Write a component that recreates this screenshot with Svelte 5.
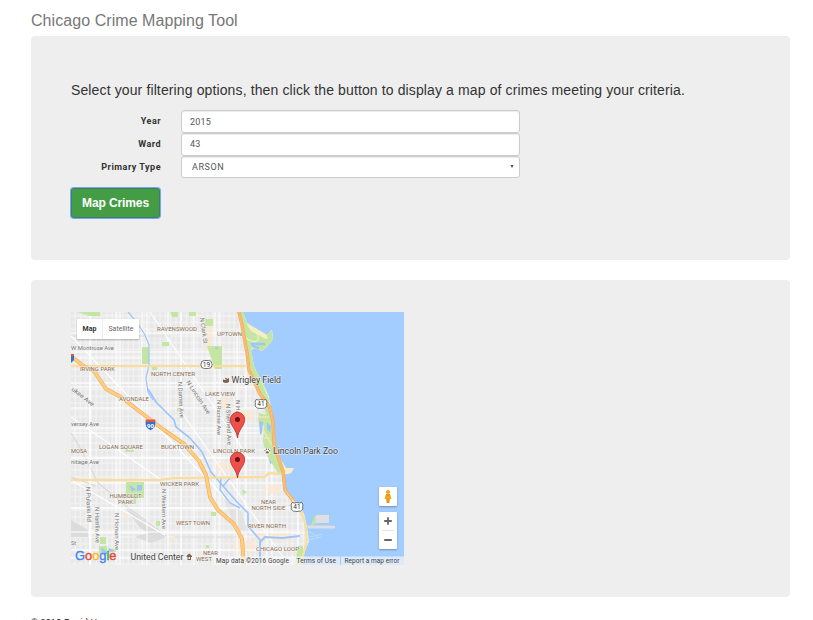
<script>
  const brown = '#8a6e50';
  const gray = '#777';

  // x, y, text, width, size, colour, rotation
  const labels = [
    [157, 331, 'RAVENSWOOD', 40, 6.2, brown, 0],
    [217, 335.5, 'UPTOWN', 25, 6.2, brown, 0],
    [80, 371, 'IRVING PARK', 35, 6, brown, 0],
    [151, 376, 'NORTH CENTER', 44, 6.2, brown, 0],
    [119, 400.5, 'AVONDALE', 30, 6.2, brown, 0],
    [205, 395.5, 'LAKE VIEW', 30, 6.2, brown, 0],
    [99, 448.5, 'LOGAN SQUARE', 44, 6.2, brown, 0],
    [161, 449, 'BUCKTOWN', 33, 6.2, brown, 0],
    [213, 452.5, 'LINCOLN PARK', 42, 6.2, brown, 0],
    [71, 452.5, 'MOSA', 16, 6.2, brown, 0],
    [160, 485.5, 'WICKER PARK', 39, 6.2, brown, 0],
    [109.5, 497.5, 'HUMBOLDT', 32, 6.2, brown, 0],
    [118, 503.5, 'PARK', 15, 6.2, brown, 0],
    [176, 525, 'WEST TOWN', 34, 6.2, brown, 0],
    [261, 504, 'NEAR', 15, 6.2, brown, 0],
    [251.5, 510.3, 'NORTH SIDE', 34, 6.2, brown, 0],
    [248, 528, 'RIVER NORTH', 38, 6.2, brown, 0],
    [256, 551, 'CHICAGO LOOP', 43, 6.2, brown, 0],
    [203, 555, 'NEAR', 15, 6.2, brown, 0],
    [196, 561, 'WEST', 16, 6.2, brown, 0],
    [71, 349.5, 'W Montrose Ave', 43, 6, gray, 0],
    [71, 425.5, 'versey Ave', 28, 6, gray, 0],
    [71, 463.5, 'nitage Ave', 28, 6, gray, 0],
    [71, 544.5, 'St', 5, 6, gray, 0],
    [71, 390, 'ukee Ave', 27, 6, gray, 38],
    [200, 318, 'N Clark St', 26, 6, gray, 82],
    [178, 382, 'N Damen Ave', 36, 6, gray, 87],
    [186, 382, 'N Lincoln Ave', 39, 6, gray, 57],
    [217, 400, 'N Racine Ave', 35, 6, gray, 90],
    [226, 404, 'N Sheffield Ave', 41, 6, gray, 88],
    [236, 400, 'N Halsted', 28, 6, gray, 90],
    [86, 487, 'N Pulaski Rd', 35, 6, gray, 88],
    [95, 507, 'N Hamlin Ave', 36, 6, gray, 89],
    [115, 513, 'N Homan Ave', 37, 6, gray, 90],
    [162, 489, 'N Western Ave', 40, 6, gray, 90]
  ];

  const places = [
    [231.5, 383, 'Wrigley Field', 49.5],
    [273, 454, 'Lincoln Park Zoo', 65],
    [130.5, 559.5, 'United Center', 53]
  ];

  const pins = [[237.5, 438], [237.5, 478]];
  const thin = [
    'M71 336L225 498', 'M71 417L170 486', 'M71 480L165 535', 'M150 312L250 460', 'M180 410L285 560',
    'M71 352H245', 'M71 387H257', 'M71 428H270', 'M71 458H278', 'M71 508H292', 'M71 532H300', 'M71 550H300',
    'M90 312V565', 'M120 312V565', 'M147 312V565', 'M181 312V565', 'M215 312V565', 'M237 330V565', 'M267 440V565'
  ];
</script>

<main>
  <h3>Chicago Crime Mapping Tool</h3>

  <section class="panel filters">
    <p>Select your filtering options, then click the button to display a map of crimes meeting your criteria.</p>
    <form onsubmit={(e) => e.preventDefault()}>
      <div class="row"><label for="year">Year</label><input id="year" value="2015" /></div>
      <div class="row"><label for="ward">Ward</label><input id="ward" class="ward" value="43" /></div>
      <div class="row">
        <label for="type">Primary Type</label>
        <button type="button" id="type" class="select">
          <span>ARSON</span>
          <svg width="4" height="3" viewBox="0 0 4 3"><path d="M.5 0H3.500L2 3Z" fill="#444" /></svg>
        </button>
      </div>
      <button type="submit" class="submit">Map Crimes</button>
    </form>
  </section>

  <section class="panel results">
    <div class="map">
      <svg class="canvas" viewBox="71 312 333 253" width="333" height="253">
        <defs>
          <pattern id="blocks" width="5.3" height="6.7" patternUnits="userSpaceOnUse">
            <path d="M0 1H5.3M1 0V6.7" stroke="#f6f6f6" stroke-width=".9" />
          </pattern>
          <pattern id="avenues" x="4" y="2" width="26" height="25" patternUnits="userSpaceOnUse">
            <path d="M0 6H26M8 0V25" stroke="#fff" stroke-width="1.1" />
          </pattern>
          <clipPath id="shore">
            <path d="M71 312H243L247 323L267 335L272 330L273 339L268 346L262 351L255 348L251 350L254 366L260 379L269 397L273 418L274 439L279 457L286 468L294 468L291 473L283 475L285 493L292 500L299 505L304 514L307 527L309 541L304 554L301 565H71Z" />
          </clipPath>
        </defs>

        <rect x="71" y="312" width="333" height="253" fill="#a3ccff" />
        <path d="M251 365L256 370L264 384L269 396L264 394L257 383Z" fill="#c4e6a2" />
        <g clip-path="url(#shore)">
          <rect x="71" y="312" width="235" height="253" fill="#e8e8e8" />
          <rect x="300" y="505" width="15" height="60" fill="#e8e8e8" />
          <rect x="71" y="312" width="240" height="253" fill="url(#blocks)" />
          <rect x="71" y="312" width="240" height="253" fill="url(#avenues)" />

          <g fill="#dcdcdc">
            <path d="M71 520L88 530V537H71Z" />
            <path d="M125 507L143 520L165 536L159 540L140 528Z" />
            <path d="M135 537Q149 530 166 537L151 543Z" />
            <path d="M224 500L240 510L250 535L236 530Z" opacity=".6" />
          </g>
          <g stroke="#d8d8d8" stroke-width="1.1" fill="none">
            <path d="M71 433L82 451L98 483L130 509L166 536" />
            <path d="M71 477L96 486M175 537H240M71 336H170" />
          </g>

          <g fill="#fbe8d0" opacity=".7">
            <path d="M205 320H212V350H205ZM220 398H230V410H220ZM238 410H253V420H238ZM216 463H233V471H216ZM264 485H280V494H264ZM255 533H291V541H255ZM234 541H255V552H234ZM123 512H128V517H123ZM170 536H175V541H170Z" />
          </g>

          <g stroke="#fff" stroke-width="1.1" fill="none">
            {#each thin as d}<path {d} />{/each}
          </g>

          <g fill="#c4e6a2">
            <path d="M142 347H149V364H142ZM152 367H157V370H152ZM162 342H169V346H162ZM77 312H100V316H90L86 315ZM170 312H178V317H172ZM205 319H213V326H205Z" />
            <path d="M207 346H222V369H215ZM189 312H196V316H189ZM126 482H144V498H126ZM133 498H136V504H133ZM100 537H106V544H100ZM99 546H107V554H99ZM108 549H116V552H108Z" />
            <path d="M156 521H160V526H156ZM90 424H94V427H90ZM177 408H181V411H177ZM242 489L247 492L243 495ZM206 545H209V548H206ZM211 512H216V516H211ZM125 450H134V452H125Z" />
            <path d="M240 312H245L249 323L274 331L273 342L262 351L251 348L255 368L268 397L273 418V437L280 456L286 472L278 473L267 456L263 442L264 426L258 420L259 413L266 415L263 403L251 370L246 345Z" />
            <path d="M298 546H303V565H295Z" />
          </g>

          <path d="M246 323L250 325L266 334L268 339L264 338L251 331Z" fill="#f9edc3" />
          <path d="M281 459Q287 470 294 469V474L286 474Z" fill="#f9edc3" />
          <path d="M246 338Q254 344 258 340Q260 334 251 329" stroke="#e8f2c8" stroke-width="1.2" fill="none" />
          <path d="M257 420L272 445M264 438H270M259 417H269" stroke="#eee5b8" stroke-width="1.5" fill="none" />

          <g stroke="#9cc6fb" fill="none">
            <path d="M128 312L136 321L145 335L149 345V365L146 378L148 392L153 400" stroke-width="1.2" />
            <path d="M148 389L156 402L166 412L174 420L176 427L190 438L202 452L211 472L223 486L237 502L248 513V526L261 541" stroke-width="1.7" />
            <path d="M221 478L220 490L230 503L240 508M223 486L230 478" stroke-width="1.5" />
            <path d="M260 565V542L265 537L282 538L300 536" stroke-width="2" />
            <path d="M259 348Q253 347 252 344H265" stroke-width="2.3" />
          </g>
          <g fill="#9cc6fb">
            <path d="M129 485L136 489L132 492ZM137 485H142V490L137 491ZM101 547L107 552V554L102 553ZM109 548L113 550V552L109 551Z" />
            <path d="M259 421L263 422L262 433L260 435ZM267 422L271 426L270 433L267 429ZM269 459L272 463L270 464Z" />
            <circle cx="216.5" cy="348" r="1.2" />
          </g>
        </g>

        <g stroke-linecap="round" stroke-linejoin="round" fill="none">
          <g stroke="#fcdc96" stroke-width="2.2">
            <path d="M72 366H245" />
            <path d="M72 480H160L174 478L265 477L269 473L280 474" />
          </g>
          <g stroke="#f2ad64" stroke-width="4">
            <path d="M72 357L85 367L94 371L106 389L121 397L139 411L164 430L184 444L199 461L206 475L210 497L218 510L234 524L242 539L244 565" />
            <path d="M239 312L242 325L247 353L249 370L260 394L269 406L273 421L274 444L283 472L285 490L294 502" stroke-width="3.5" />
          </g>
          <g stroke="#fdcd80" stroke-width="2.7">
            <path d="M72 357L85 367L94 371L106 389L121 397L139 411L164 430L184 444L199 461L206 475L210 497L218 510L234 524L242 539L244 565" />
            <path d="M239 312L242 325L247 353L249 370L260 394L269 406L273 421L274 444L283 472L285 490L294 502" stroke-width="1.7" />
          </g>
          <path d="M239 312L242 325L247 353L249 370L260 394L269 406L273 421L274 444L283 472L285 490" stroke="#ef9f4c" stroke-width=".5" />
          <path d="M293 501L301 511L305 523L307 540L301 563" stroke="#f9df98" stroke-width="2.2" />
        </g>

        <path d="M311 525L315 516H317V522L313 525Z" fill="#c4e6a2" />
        <path d="M316 515H329V523H316Z" fill="#dedfe0" />
        <path d="M307 525.5H326L335 526V528.5H308Z" fill="#dedfe0" />
        <path d="M306 530L318 537M310 537L323 534M308 540L321 537" stroke="#bddafa" stroke-width=".9" fill="none" />

        <g class="labels">
          {#each labels as [x, y, text, width, size, color, angle]}
            <text {x} {y} font-size={size} fill={color} textLength={width} lengthAdjust="spacingAndGlyphs" transform="rotate({angle} {x} {y})">{text}</text>
          {/each}
        </g>
        <g class="places">
          {#each places as [x, y, text, width]}
            <text {x} {y} textLength={width} lengthAdjust="spacingAndGlyphs">{text}</text>
          {/each}
        </g>

        <g fill="#7b6250">
          <path d="M223 379.500L225 380L229 378V382Q226 384 223 382Z" />
          <circle cx="226" cy="378.5" r=".8" />
          <path d="M187.500 560V557H188.500V559H190V557H191V560Z" />
          <path d="M186.500 556L189.200 553.500L192 556V557H186.500Z" />
        </g>
        <circle cx="267.3" cy="451.3" r="3.3" fill="#fff" />
        <g fill="#7b6250">
          <path d="M265.300 453.500Q265.800 451 267.300 451T269.400 453.500Q267.300 452.800 265.300 453.500Z" />
          <circle cx="265" cy="450.8" r=".7" /><circle cx="266.5" cy="449.3" r=".7" />
          <circle cx="268.3" cy="449.3" r=".7" /><circle cx="269.7" cy="450.8" r=".7" />
        </g>

        <g class="shield">
          <rect x="201" y="360.5" width="11" height="8" rx="3.5" />
          <text x="206.5" y="367" text-anchor="middle">19</text>
          {#each [[261, 404], [297, 507]] as [x, y]}
            <path d="M{x - 5} {y - 4.5}Q{x - 2.5} {y - 3.5} {x} {y - 4.5}Q{x + 2.5} {y - 3.5} {x + 5} {y - 4.5}L{x + 6} {y - 2}Q{x + 5} {y} {x + 6} {y + 2}Q{x + 4} {y + 5} {x} {y + 4.5}Q{x - 4} {y + 5} {x - 6} {y + 2}Q{x - 5} {y} {x - 6} {y - 2}Z" />
            <text {x} y={y + 2.4} text-anchor="middle">41</text>
          {/each}
        </g>
        <path d="M145.500 421Q144 427.500 150.500 430.500Q157 427.500 155.500 421Z" fill="#3974c4" stroke="#fff" stroke-width=".5" />
        <path d="M145.700 419.500H155.400V422H145.700Z" fill="#d95750" />
        <text class="route" x="150.5" y="427.7" text-anchor="middle">90</text>
        <path d="M71 355H74V360L71 363Z" fill="#3974c4" />
        <path d="M71 354H74V356H71Z" fill="#d95750" />

        {#each pins as [x, y]}
          <g transform="translate({x} {y})">
            <path d="M0 0C-1-9-7.200-12-7.200-18.500A7.200 7.200 0 0 1 7.200-18.500C7.200-12 1-9 0 0Z" fill="#ee4f48" stroke="#b42d2a" stroke-width=".8" />
            <circle cx="0" cy="-18.5" r="2.5" fill="#641415" />
          </g>
        {/each}

        <rect x="214" y="556.5" width="190" height="8.5" fill="#f5f5f5" opacity=".72" />
        <path d="M340.500 556V565" stroke="#a3ccff" />
        <g class="legal">
          <text x="216" y="563" textLength="73">Map data ©2016 Google</text>
          <text x="296.5" y="563" textLength="39.5">Terms of Use</text>
          <text x="344.5" y="563" textLength="55">Report a map error</text>
        </g>
        <text class="google" x="75" y="560" textLength="41.5" lengthAdjust="spacingAndGlyphs"><tspan fill="#4285f4" stroke="#4285f4">G</tspan><tspan fill="#ea4335" stroke="#ea4335">o</tspan><tspan fill="#fbbc05" stroke="#fbbc05">o</tspan><tspan fill="#4285f4" stroke="#4285f4">g</tspan><tspan fill="#34a853" stroke="#34a853">l</tspan><tspan fill="#ea4335" stroke="#ea4335">e</tspan></text>
      </svg>

      <div class="kinds"><b>Map</b><span>Satellite</span></div>
      <div class="controls">
        <div class="person">
          <svg width="10" height="15" viewBox="0 0 10 15"><circle cx="5" cy="3" r="2.1" fill="#efa51f" /><path d="M3 5H7L8.500 9.500L6.800 10.500L6.500 14H3.500L3.200 10.500L1.500 9.500Z" fill="#efa51f" /><path d="M3.300 5.500L5 7L6.700 5.500M5 10V14" stroke="#c88216" stroke-width=".7" fill="none" /></svg>
        </div>
        <div class="zoom">
          <svg width="18" height="37" viewBox="0 0 18 37"><path d="M5.200 9H12.800M9 5.200V12.800M5.200 28H12.800" stroke="#666" stroke-width="1.8" /><path d="M3 18.500H15" stroke="#e3e3e3" /></svg>
        </div>
      </div>
    </div>
  </section>
  <footer>© 2016 David H</footer>
</main>

<style>
  :global(body) { background: #fff; overflow: hidden; }
  main { box-sizing: border-box; width: 813px; height: 620px; padding: 10px 23px 0 31px; overflow: hidden; font-family: Roboto, sans-serif; color: #333; }
  h3 { height: 26px; margin: 0; font: 16px/21px "Liberation Sans", Arial, sans-serif; letter-spacing: .06px; color: #777; }
  .panel { box-sizing: border-box; background: #eee; border-radius: 4px; padding-left: 40px; }
  .filters { height: 224px; padding-top: 44px; }
  .results { height: 317px; margin-top: 20px; padding-top: 32px; }
  p { margin: 0 0 10px; font: 14px/20px "Liberation Sans", Arial, sans-serif; letter-spacing: .122px; white-space: nowrap; }
  .row { display: flex; height: 23px; }
  label { width: 90px; margin-right: 20px; text-align: right; font-size: 9px; font-weight: 700; line-height: 23px; letter-spacing: .5px; }
  input, .select { box-sizing: border-box; width: 339px; height: 23px; margin: 0; padding: 0 8px; background: #fff; border: 1px solid #ccc; border-radius: 3px; color: #555; font: 9px Roboto, sans-serif; letter-spacing: .2px; box-shadow: inset 0 1px 1px rgba(0, 0, 0, .075); }
  .ward { padding-bottom: 2px; }
  .select { height: 22px; display: flex; align-items: center; justify-content: space-between; padding: 0 5px 1px 10px; letter-spacing: .55px; }
  .submit { display: block; box-sizing: border-box; width: 89px; height: 30px; margin-top: 9px; padding: 0; color: #fff; background: #449d44; border: 1px solid #3b7d75; border-radius: 3px; font: bold 12px "Liberation Sans", Arial, sans-serif; letter-spacing: -.1px; box-shadow: 0 0 0 1px #7aa7e8; }
  .map { position: relative; width: 333px; height: 253px; overflow: hidden; }
  .canvas { display: block; }
  .labels text { paint-order: stroke; stroke: #f4f4f4; stroke-width: 1.2px; stroke-opacity: .8; }
  .places text { font-size: 8.5px; fill: #444; paint-order: stroke; stroke: #f3f3f3; stroke-width: 1.3px; stroke-opacity: .65; }
  .shield rect, .shield path { fill: #fff; stroke: #555; stroke-width: .8; }
  .shield text { font-size: 6.5px; fill: #333; }
  .route { fill: #fff; font-size: 6px; font-weight: 700; }
  .legal { font-size: 6.5px; fill: #444; }
  .google { font: 13.5px "Liberation Sans", Arial, sans-serif; stroke-width: .4px; }
  .kinds { position: absolute; left: 6px; top: 7px; width: 62px; height: 20px; display: flex; background: #fff; border-radius: 1px; box-shadow: 0 1px 2px rgba(0, 0, 0, .25); font-size: 7px; line-height: 20px; text-align: center; }
  .kinds b { width: 25px; font-weight: 700; color: #333; border-right: 1px solid #eee; }
  .kinds span { flex: 1; color: #666; }
  .controls { position: absolute; right: 7px; top: 175px; width: 18px; display: flex; flex-direction: column; gap: 6px; }
  .person, .zoom { background: #fff; border-radius: 1px; box-shadow: 0 1px 2px rgba(0, 0, 0, .3); }
  .person { height: 19px; display: flex; align-items: center; justify-content: center; }
  .zoom { height: 37px; }
  .zoom svg { display: block; }
  footer { margin-top: 19px; font: 9px/12px "Liberation Sans", Arial, sans-serif; letter-spacing: .18px; white-space: nowrap; color: #222; }
</style>
